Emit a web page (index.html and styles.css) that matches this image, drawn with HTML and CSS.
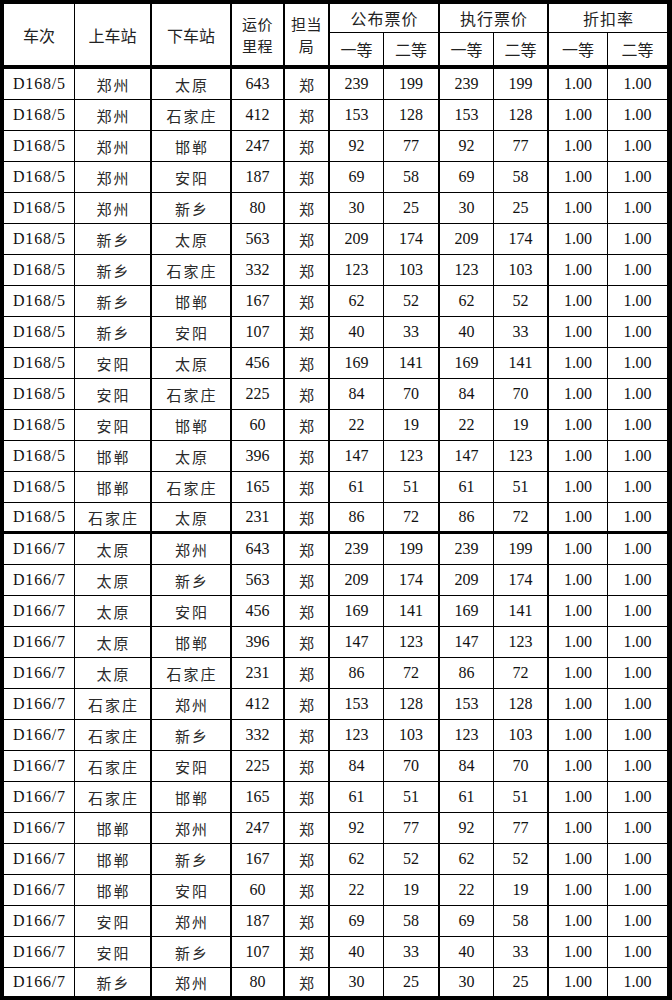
FILE: index.html
```html
<!DOCTYPE html>
<html lang="zh-CN">
<head>
<meta charset="utf-8">
<title>票价表</title>
<link rel="stylesheet" href="styles.css">
</head>
<body>
<table class="fares">
  <colgroup>
    <col class="w-train"><col class="w-from"><col class="w-to"><col class="w-km"><col class="w-bureau">
    <col class="w-p"><col class="w-p2"><col class="w-p"><col class="w-p3"><col class="w-r"><col class="w-r2">
  </colgroup>
  <thead>
    <tr class="h1">
      <th rowspan="2" class="hd">车次</th>
      <th rowspan="2" class="hd major">上车站</th>
      <th rowspan="2" class="hd major">下车站</th>
      <th rowspan="2" class="hd major two"><span class="ln">运价</span><span class="ln">里程</span></th>
      <th rowspan="2" class="hd major two"><span class="ln">担当</span><span class="ln">局</span></th>
      <th colspan="2" class="grp major">公布票价</th>
      <th colspan="2" class="grp major">执行票价</th>
      <th colspan="2" class="grp last">折扣率</th>
    </tr>
    <tr class="h2">
      <th class="hd">一等</th>
      <th class="hd major">二等</th>
      <th class="hd">一等</th>
      <th class="hd major">二等</th>
      <th class="hd">一等</th>
      <th class="hd last">二等</th>
    </tr>
  </thead>
  <tbody>
    <tr><td class="tr">D168/5</td><td class="st major">郑州</td><td class="st major">太原</td><td class="major">643</td><td class="st major">郑</td><td>239</td><td class="major">199</td><td>239</td><td class="major">199</td><td>1.00</td><td class="last">1.00</td></tr>
    <tr><td class="tr">D168/5</td><td class="st major">郑州</td><td class="st major">石家庄</td><td class="major">412</td><td class="st major">郑</td><td>153</td><td class="major">128</td><td>153</td><td class="major">128</td><td>1.00</td><td class="last">1.00</td></tr>
    <tr><td class="tr">D168/5</td><td class="st major">郑州</td><td class="st major">邯郸</td><td class="major">247</td><td class="st major">郑</td><td>92</td><td class="major">77</td><td>92</td><td class="major">77</td><td>1.00</td><td class="last">1.00</td></tr>
    <tr><td class="tr">D168/5</td><td class="st major">郑州</td><td class="st major">安阳</td><td class="major">187</td><td class="st major">郑</td><td>69</td><td class="major">58</td><td>69</td><td class="major">58</td><td>1.00</td><td class="last">1.00</td></tr>
    <tr><td class="tr">D168/5</td><td class="st major">郑州</td><td class="st major">新乡</td><td class="major">80</td><td class="st major">郑</td><td>30</td><td class="major">25</td><td>30</td><td class="major">25</td><td>1.00</td><td class="last">1.00</td></tr>
    <tr><td class="tr">D168/5</td><td class="st major">新乡</td><td class="st major">太原</td><td class="major">563</td><td class="st major">郑</td><td>209</td><td class="major">174</td><td>209</td><td class="major">174</td><td>1.00</td><td class="last">1.00</td></tr>
    <tr><td class="tr">D168/5</td><td class="st major">新乡</td><td class="st major">石家庄</td><td class="major">332</td><td class="st major">郑</td><td>123</td><td class="major">103</td><td>123</td><td class="major">103</td><td>1.00</td><td class="last">1.00</td></tr>
    <tr><td class="tr">D168/5</td><td class="st major">新乡</td><td class="st major">邯郸</td><td class="major">167</td><td class="st major">郑</td><td>62</td><td class="major">52</td><td>62</td><td class="major">52</td><td>1.00</td><td class="last">1.00</td></tr>
    <tr><td class="tr">D168/5</td><td class="st major">新乡</td><td class="st major">安阳</td><td class="major">107</td><td class="st major">郑</td><td>40</td><td class="major">33</td><td>40</td><td class="major">33</td><td>1.00</td><td class="last">1.00</td></tr>
    <tr><td class="tr">D168/5</td><td class="st major">安阳</td><td class="st major">太原</td><td class="major">456</td><td class="st major">郑</td><td>169</td><td class="major">141</td><td>169</td><td class="major">141</td><td>1.00</td><td class="last">1.00</td></tr>
    <tr><td class="tr">D168/5</td><td class="st major">安阳</td><td class="st major">石家庄</td><td class="major">225</td><td class="st major">郑</td><td>84</td><td class="major">70</td><td>84</td><td class="major">70</td><td>1.00</td><td class="last">1.00</td></tr>
    <tr><td class="tr">D168/5</td><td class="st major">安阳</td><td class="st major">邯郸</td><td class="major">60</td><td class="st major">郑</td><td>22</td><td class="major">19</td><td>22</td><td class="major">19</td><td>1.00</td><td class="last">1.00</td></tr>
    <tr><td class="tr">D168/5</td><td class="st major">邯郸</td><td class="st major">太原</td><td class="major">396</td><td class="st major">郑</td><td>147</td><td class="major">123</td><td>147</td><td class="major">123</td><td>1.00</td><td class="last">1.00</td></tr>
    <tr><td class="tr">D168/5</td><td class="st major">邯郸</td><td class="st major">石家庄</td><td class="major">165</td><td class="st major">郑</td><td>61</td><td class="major">51</td><td>61</td><td class="major">51</td><td>1.00</td><td class="last">1.00</td></tr>
    <tr class="grp-end"><td class="tr">D168/5</td><td class="st major">石家庄</td><td class="st major">太原</td><td class="major">231</td><td class="st major">郑</td><td>86</td><td class="major">72</td><td>86</td><td class="major">72</td><td>1.00</td><td class="last">1.00</td></tr>
    <tr><td class="tr">D166/7</td><td class="st major">太原</td><td class="st major">郑州</td><td class="major">643</td><td class="st major">郑</td><td>239</td><td class="major">199</td><td>239</td><td class="major">199</td><td>1.00</td><td class="last">1.00</td></tr>
    <tr><td class="tr">D166/7</td><td class="st major">太原</td><td class="st major">新乡</td><td class="major">563</td><td class="st major">郑</td><td>209</td><td class="major">174</td><td>209</td><td class="major">174</td><td>1.00</td><td class="last">1.00</td></tr>
    <tr><td class="tr">D166/7</td><td class="st major">太原</td><td class="st major">安阳</td><td class="major">456</td><td class="st major">郑</td><td>169</td><td class="major">141</td><td>169</td><td class="major">141</td><td>1.00</td><td class="last">1.00</td></tr>
    <tr><td class="tr">D166/7</td><td class="st major">太原</td><td class="st major">邯郸</td><td class="major">396</td><td class="st major">郑</td><td>147</td><td class="major">123</td><td>147</td><td class="major">123</td><td>1.00</td><td class="last">1.00</td></tr>
    <tr><td class="tr">D166/7</td><td class="st major">太原</td><td class="st major">石家庄</td><td class="major">231</td><td class="st major">郑</td><td>86</td><td class="major">72</td><td>86</td><td class="major">72</td><td>1.00</td><td class="last">1.00</td></tr>
    <tr><td class="tr">D166/7</td><td class="st major">石家庄</td><td class="st major">郑州</td><td class="major">412</td><td class="st major">郑</td><td>153</td><td class="major">128</td><td>153</td><td class="major">128</td><td>1.00</td><td class="last">1.00</td></tr>
    <tr><td class="tr">D166/7</td><td class="st major">石家庄</td><td class="st major">新乡</td><td class="major">332</td><td class="st major">郑</td><td>123</td><td class="major">103</td><td>123</td><td class="major">103</td><td>1.00</td><td class="last">1.00</td></tr>
    <tr><td class="tr">D166/7</td><td class="st major">石家庄</td><td class="st major">安阳</td><td class="major">225</td><td class="st major">郑</td><td>84</td><td class="major">70</td><td>84</td><td class="major">70</td><td>1.00</td><td class="last">1.00</td></tr>
    <tr><td class="tr">D166/7</td><td class="st major">石家庄</td><td class="st major">邯郸</td><td class="major">165</td><td class="st major">郑</td><td>61</td><td class="major">51</td><td>61</td><td class="major">51</td><td>1.00</td><td class="last">1.00</td></tr>
    <tr><td class="tr">D166/7</td><td class="st major">邯郸</td><td class="st major">郑州</td><td class="major">247</td><td class="st major">郑</td><td>92</td><td class="major">77</td><td>92</td><td class="major">77</td><td>1.00</td><td class="last">1.00</td></tr>
    <tr><td class="tr">D166/7</td><td class="st major">邯郸</td><td class="st major">新乡</td><td class="major">167</td><td class="st major">郑</td><td>62</td><td class="major">52</td><td>62</td><td class="major">52</td><td>1.00</td><td class="last">1.00</td></tr>
    <tr><td class="tr">D166/7</td><td class="st major">邯郸</td><td class="st major">安阳</td><td class="major">60</td><td class="st major">郑</td><td>22</td><td class="major">19</td><td>22</td><td class="major">19</td><td>1.00</td><td class="last">1.00</td></tr>
    <tr><td class="tr">D166/7</td><td class="st major">安阳</td><td class="st major">郑州</td><td class="major">187</td><td class="st major">郑</td><td>69</td><td class="major">58</td><td>69</td><td class="major">58</td><td>1.00</td><td class="last">1.00</td></tr>
    <tr><td class="tr">D166/7</td><td class="st major">安阳</td><td class="st major">新乡</td><td class="major">107</td><td class="st major">郑</td><td>40</td><td class="major">33</td><td>40</td><td class="major">33</td><td>1.00</td><td class="last">1.00</td></tr>
    <tr class="end"><td class="tr">D166/7</td><td class="st major">新乡</td><td class="st major">郑州</td><td class="major">80</td><td class="st major">郑</td><td>30</td><td class="major">25</td><td>30</td><td class="major">25</td><td>1.00</td><td class="last">1.00</td></tr>
  </tbody>
</table>
</body>
</html>
```
FILE: styles.css
```css
html, body {
  margin: 0;
  padding: 0;
  background: #ffffff;
}

.fares {
  width: 672px;
  table-layout: fixed;
  border-collapse: separate;
  border-spacing: 0;
  border-top: 4px solid #000;
  border-left: 4px solid #000;
  font-family: "Liberation Serif", "Noto Sans CJK SC", serif;
  font-size: 16px;
  color: #111;
}

.w-train { width: 71px; }
.w-from { width: 77px; }
.w-to { width: 80px; }
.w-km { width: 53px; }
.w-bureau { width: 45px; }
.w-p { width: 54px; }
.w-p2 { width: 56px; }
.w-p3 { width: 55px; }
.w-r { width: 59px; }
.w-r2 { width: 64px; }

.fares th,
.fares td {
  padding: 0;
  text-align: center;
  vertical-align: middle;
  border-right: 1px solid #000;
  border-bottom: 1px solid #000;
  font-weight: normal;
  white-space: nowrap;
  overflow: hidden;
}

.fares .major { border-right-width: 2px; }
.fares .last { border-right-width: 5px; }

.hd, .grp {
  font-family: "Noto Sans CJK SC", sans-serif;
  font-size: 16px;
  color: #222;
  line-height: 20px;
}

.grp { letter-spacing: 1px; text-indent: 1px; }

.fares .two {
  font-size: 15px;
  letter-spacing: 0.5px;
}

.two .ln {
  display: block;
  height: 22px;
  line-height: 22px;
}

.h1 { height: 29px; }
.h2 { height: 36px; }
.h2 th,
.h1 th[rowspan] { border-bottom-width: 4px; }

.fares tbody tr { height: 31px; }
.fares tbody tr.grp-end td { border-bottom-width: 3px; }
.fares tbody tr.end { height: 32px; }
.fares tbody tr.end td { border-bottom-width: 4px; }

.tr {
  letter-spacing: 0.8px;
  text-indent: 0.8px;
}

.st {
  font-family: "Noto Sans CJK SC", sans-serif;
  font-size: 15px;
  font-weight: 300;
  letter-spacing: 2px;
  text-indent: 2px;
  color: #2a2a2a;
}
```
